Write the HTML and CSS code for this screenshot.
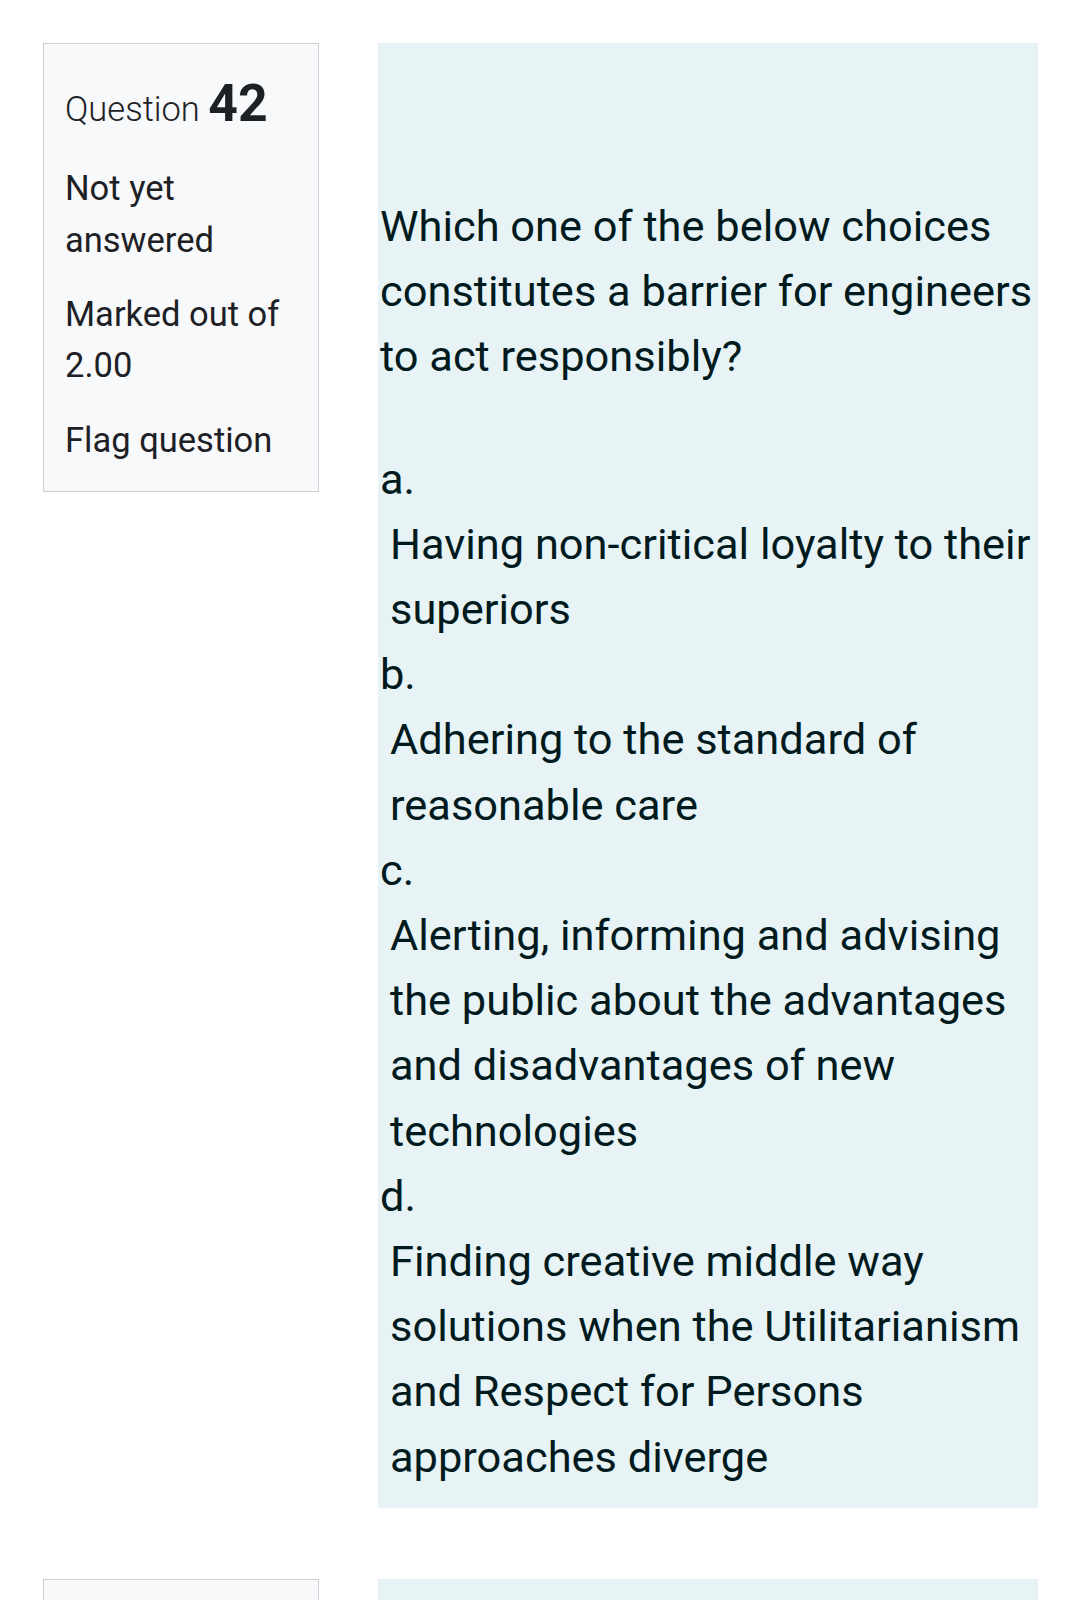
FILE: index.html
```html
<!DOCTYPE html>
<html lang="en">
<head>
<meta charset="utf-8">
<title>Question 42</title>
<link rel="stylesheet" href="styles.css">
</head>
<body>
<div class="page">
  <div class="que">
    <div class="info">
      <h3 class="no">Question <span class="qno">42</span></h3>
      <div class="state">Not yet answered</div>
      <div class="grade">Marked out of 2.00</div>
      <div class="flag">Flag question</div>
    </div>
    <div class="formulation">
      <div class="qtext">Which one of the below choices constitutes a barrier for engineers to act responsibly?</div>
      <div class="answers">
        <div class="option">
          <div class="num">a.</div>
          <div class="text">Having non-critical loyalty to their superiors</div>
        </div>
        <div class="option">
          <div class="num">b.</div>
          <div class="text">Adhering to the standard of reasonable care</div>
        </div>
        <div class="option">
          <div class="num">c.</div>
          <div class="text">Alerting, informing and advising the public about the advantages and disadvantages of new technologies</div>
        </div>
        <div class="option">
          <div class="num">d.</div>
          <div class="text">Finding creative middle way solutions when the Utilitarianism and Respect for Persons approaches diverge</div>
        </div>
      </div>
    </div>
  </div>
  <div class="que">
    <div class="info info-next"></div>
    <div class="formulation formulation-next"></div>
  </div>
</div>
</body>
</html>
```

FILE: styles.css
```css
html, body {
  margin: 0;
  padding: 0;
  background: #ffffff;
}

body {
  font-family: Roboto, "Liberation Sans", Arial, sans-serif;
}

.page {
  padding: 43px 42px 0 43px;
}

.que {
  display: flex;
  align-items: flex-start;
  gap: 59px;
  margin-bottom: 71px;
}

.info {
  box-sizing: border-box;
  width: 276px;
  flex: 0 0 276px;
  background: #f8f9fa;
  border: 1px solid #cdd1d5;
  padding: 29px 19px 24px 21px;
  color: #1d2125;
  font-size: 34.5px;
  line-height: 51.75px;
}

.no {
  margin: 0 0 28px 0;
  font-size: 34.5px;
  font-weight: 300;
  line-height: 1.2;
  color: #1d2125;
}

.qno {
  font-size: 1.5em;
  font-weight: 700;
}

.state {
  margin-bottom: 22px;
}

.grade {
  margin-bottom: 23px;
}

.formulation {
  flex: 1 1 auto;
  background: #e7f3f5;
  color: #001a1e;
  font-size: 43.4px;
  line-height: 65.2px;
  padding: 151px 3px 18px 2px;
}

.qtext {
  margin-bottom: 57px;
}

.option .text {
  padding-left: 10px;
}

.info-next {
  height: 300px;
  padding: 0;
}

.formulation-next {
  height: 300px;
  padding: 0;
}
```
